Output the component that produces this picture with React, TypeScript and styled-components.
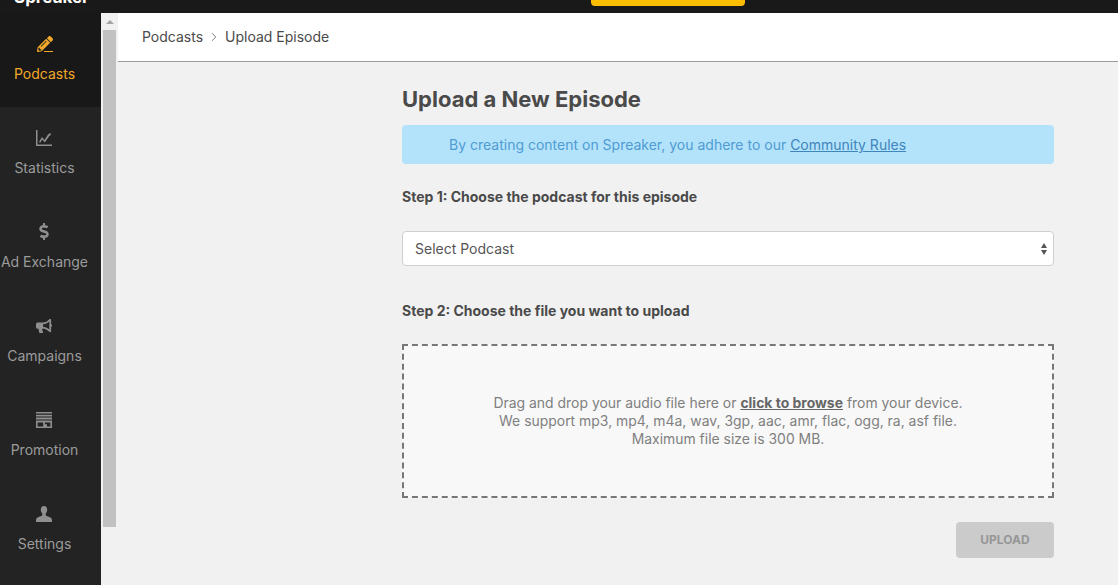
import React from 'react';
import { FaBullhorn, FaDollarSign, FaPencilAlt } from 'react-icons/fa';
import { FiChevronRight } from 'react-icons/fi';
import styled, { createGlobalStyle } from 'styled-components';

const GlobalStyle = createGlobalStyle`
  html, body {
    margin: 0;
    height: 100%;
    overflow: hidden;
    background: #f1f1f1;
    font-family: Inter, "Liberation Sans", sans-serif;
  }
  * { box-sizing: border-box; }
`;

const ChartIcon = () => (
  <svg width="16" height="16" viewBox="0 0 16 16" fill="currentColor">
    <path d="M0 0h1.5v14.5H16V16H0z" />
    <path d="M3 12l3-5 2.5 3L12 4.5l.6-.6L15 3l-.6 2.8-.8-.4L8.8 12.4 6.2 9.4 4.3 12.8z" />
  </svg>
);

const StoreIcon = () => (
  <svg width="16" height="16" viewBox="0 0 16 16" fill="currentColor">
    <path d="M0 0h16v1.6H0zM0 2.8h16v1.6H0zM0 5.6h16v1.8H0z" />
    <path d="M0 8.6h16V16H0zM1.6 10.4v4h5.6v-4zM9 10.4v1.8h2v2.2h3.4v-4z" fillRule="evenodd" />
  </svg>
);

const UserIcon = () => (
  <svg width="16" height="16" viewBox="0 0 16 16" fill="currentColor">
    <path d="M8 0c2 0 3.2 1.5 3.2 3.6 0 1.6-.6 3-1.5 3.9v1.6c0 .6 1 1 2.400 1.500 1.700.6 3.900 1.400 3.900 3.400V16H0v-2c0-2 2.200-2.800 3.900-3.400 1.400-.5 2.400-.9 2.400-1.500V7.500C5.400 6.600 4.800 5.200 4.800 3.600 4.800 1.500 6 0 8 0z" />
  </svg>
);

const navItems = [
  { label: 'Podcasts', icon: <FaPencilAlt size={16} />, active: true },
  { label: 'Statistics', icon: <ChartIcon /> },
  { label: 'Ad Exchange', icon: <FaDollarSign size={17} /> },
  { label: 'Campaigns', icon: <FaBullhorn size={16} /> },
  { label: 'Promotion', icon: <StoreIcon /> },
  { label: 'Settings', icon: <UserIcon /> },
];

const App = () => (
  <Page>
    <GlobalStyle />
    <TopBar>
      <Logo>Spreaker</Logo>
      <TopButton />
    </TopBar>
    <Body>
      <Sidebar>
        {navItems.map((item) => (
          <NavItem key={item.label} $active={item.active}>
            <NavIcon $active={item.active}>
              {item.icon}
              {item.active && <PencilLine />}
            </NavIcon>
            <span>{item.label}</span>
          </NavItem>
        ))}
      </Sidebar>
      <Scrollbar>
        <ScrollArrow />
        <ScrollThumb />
      </Scrollbar>
      <Main>
        <Breadcrumb>
          <span>Podcasts</span>
          <FiChevronRight size={14} strokeWidth={1.5} />
          <span>Upload Episode</span>
        </Breadcrumb>
        <Content>
          <Title>Upload a New Episode</Title>
          <Notice>
            By creating content on Spreaker, you adhere to our <a href="#rules">Community Rules</a>
          </Notice>
          <StepLabel>Step 1: Choose the podcast for this episode</StepLabel>
          <SelectBox>
            Select Podcast
            <svg width="6" height="12" viewBox="0 0 6 12" fill="#555">
              <path d="M3 0l3 5H0zM3 12L0 7h6z" />
            </svg>
          </SelectBox>
          <StepLabel $second>Step 2: Choose the file you want to upload</StepLabel>
          <DropZone>
            <div>
              Drag and drop your audio file here or <strong>click to browse</strong> from your device.
            </div>
            <div>We support mp3, mp4, m4a, wav, 3gp, aac, amr, flac, ogg, ra, asf file.</div>
            <div>Maximum file size is 300 MB.</div>
          </DropZone>
          <Actions>
            <UploadButton disabled>UPLOAD</UploadButton>
          </Actions>
        </Content>
      </Main>
    </Body>
  </Page>
);

const Page = styled.div`
  height: 585px;
  width: 1118px;
  display: flex;
  flex-direction: column;
  overflow: hidden;
`;

const TopBar = styled.header`
  height: 13px;
  flex: none;
  background: #191919;
  display: grid;
  grid-template-columns: 591px 154px;
  overflow: hidden;
`;

const Logo = styled.div`
  margin: -13px 0 0 14px;
  color: #fff;
  font-size: 17px;
  line-height: 20px;
  font-weight: 700;
`;

const TopButton = styled.div`
  height: 6px;
  background: #fdbd03;
  border-radius: 0 0 4px 4px;
`;

const Body = styled.div`
  flex: 1;
  display: flex;
  min-height: 0;
`;

const Sidebar = styled.nav`
  width: 101px;
  flex: none;
  background: #232323;
`;

const NavItem = styled.div<{ $active?: boolean }>`
  height: 94px;
  padding: 22px 12px 0 0;
  display: flex;
  flex-direction: column;
  align-items: center;
  gap: 13px;
  font-size: 14px;
  line-height: 17px;
  white-space: nowrap;
  color: ${(p) => (p.$active ? '#f2a82a' : '#9b9b9b')};
  background: ${(p) => (p.$active ? '#181818' : 'transparent')};
`;

const NavIcon = styled.div<{ $active?: boolean }>`
  position: relative;
  height: 17px;
  width: 16px;
  margin-right: ${(p) => (p.$active ? '0' : '1px')};
  display: flex;
  align-items: center;
  justify-content: center;
  color: ${(p) => (p.$active ? '#f2a82a' : '#8f8f8f')};
`;

const PencilLine = styled.i`
  position: absolute;
  right: 0;
  bottom: 0;
  width: 9px;
  height: 1px;
  background: #f2a82a;
`;

const Scrollbar = styled.div`
  width: 17px;
  flex: none;
  background: #f1f1f1;
  padding: 0 2px;
`;

const ScrollArrow = styled.div`
  height: 17px;
  display: flex;
  align-items: center;
  justify-content: center;

  &::before {
    content: '';
    border: 4px solid transparent;
    border-top: 0;
    border-bottom: 4px solid #a3a3a3;
  }
`;

const ScrollThumb = styled.div`
  height: 497px;
  background: #c1c1c1;
`;

const Main = styled.main`
  flex: 1;
  min-width: 0;
  background: #f1f1f1;
`;

const Breadcrumb = styled.div`
  height: 49px;
  background: #fff;
  border-bottom: 1px solid #9a9a9a;
  padding: 0 0 1px 24px;
  display: flex;
  align-items: center;
  gap: 4px;
  font-size: 14px;
  color: #4a4a4a;

  svg {
    color: #666;
  }
`;

const Content = styled.div`
  width: 652px;
  margin-left: 284px;
  padding-top: 24px;
`;

const Title = styled.h1`
  margin: 0 0 12px;
  font-size: 22px;
  line-height: 27px;
  font-weight: 700;
  color: #4a4a4a;
`;

const Notice = styled.div`
  height: 39px;
  padding-left: 47px;
  line-height: 39px;
  background: #b3e3fa;
  border-radius: 4px;
  font-size: 14px;
  color: #4f9bd4;

  a {
    color: #3f85bd;
  }
`;

const StepLabel = styled.div<{ $second?: boolean }>`
  margin-top: ${(p) => (p.$second ? '37px' : '25px')};
  font-size: 14px;
  line-height: 16px;
  font-weight: 700;
  color: #4a4a4a;
`;

const SelectBox = styled.div`
  margin-top: 26px;
  height: 35px;
  padding: 0 6px 0 12px;
  display: flex;
  align-items: center;
  justify-content: space-between;
  background: #fff;
  border: 1px solid #cfcfcf;
  border-radius: 4px;
  font-size: 14px;
  color: #555;
`;

const DropZone = styled.div`
  margin-top: 25px;
  height: 154px;
  padding-bottom: 1px;
  display: flex;
  flex-direction: column;
  align-items: center;
  justify-content: center;
  background: #f8f8f8;
  border: 2px dashed #777;
  font-size: 13.95px;
  line-height: 18px;
  color: #808080;

  strong {
    color: #666;
    text-decoration: underline;
  }
`;

const Actions = styled.div`
  margin-top: 24px;
  display: flex;
  justify-content: flex-end;
`;

const UploadButton = styled.button`
  width: 98px;
  height: 36px;
  padding: 0 0 1px;
  border: 0;
  border-radius: 4px;
  background: #cbcbcb;
  color: #969696;
  font-family: inherit;
  font-size: 12px;
  font-weight: 700;
`;

export default App;
